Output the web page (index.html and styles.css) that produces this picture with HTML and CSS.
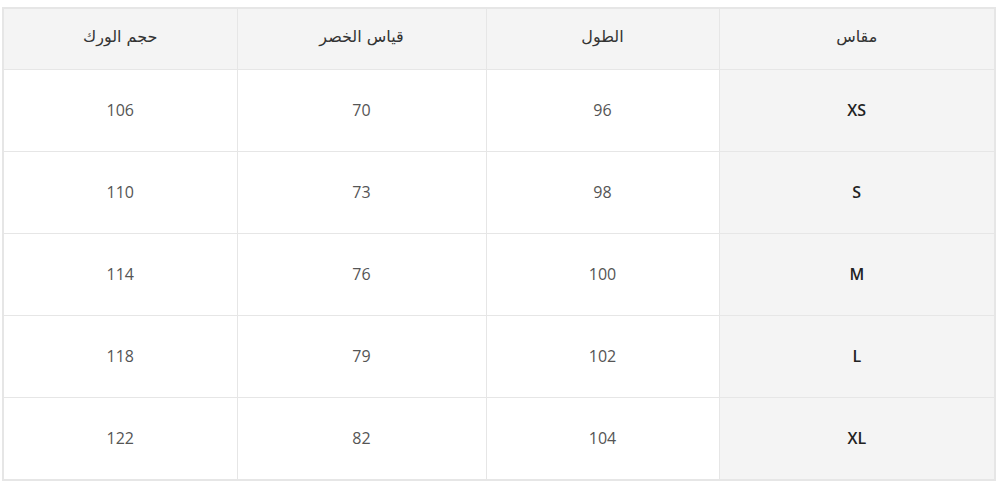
FILE: index.html
```html
<!DOCTYPE html>
<html lang="ar" dir="rtl">
<head>
<meta charset="utf-8">
<link rel="stylesheet" href="styles.css">
</head>
<body>
<table class="size-table">
  <colgroup>
    <col class="c-size"><col class="c-len"><col class="c-waist"><col class="c-hip">
  </colgroup>
  <thead>
    <tr><th>مقاس</th><th>الطول</th><th>قياس الخصر</th><th>حجم الورك</th></tr>
  </thead>
  <tbody>
    <tr><td class="size">XS</td><td>96</td><td>70</td><td>106</td></tr>
    <tr><td class="size">S</td><td>98</td><td>73</td><td>110</td></tr>
    <tr><td class="size">M</td><td>100</td><td>76</td><td>114</td></tr>
    <tr><td class="size">L</td><td>102</td><td>79</td><td>118</td></tr>
    <tr><td class="size">XL</td><td>104</td><td>82</td><td>122</td></tr>
  </tbody>
</table>
</body>
</html>
```
FILE: styles.css
```css
html, body {
  margin: 0;
  padding: 0;
  background: #ffffff;
}
body {
  padding: 7px 3px 0 4px;
  font-family: "Open Sans", "DejaVu Sans", sans-serif;
}
.size-table {
  width: 992px;
  border-collapse: collapse;
  table-layout: fixed;
  border: 2px solid #e6e6e6;
}
.c-size { width: 276px; }
.c-len { width: 233px; }
.c-waist { width: 249px; }
.c-hip { width: 234px; }
.size-table th,
.size-table td {
  border: 1px solid #e6e6e6;
  text-align: center;
  vertical-align: middle;
  padding: 0;
}
.size-table th {
  height: 61px;
  padding-bottom: 5px;
  box-sizing: border-box;
  background: #f4f4f4;
  font-family: "DejaVu Sans", "Open Sans", sans-serif;
  font-weight: 400;
  font-size: 16px;
  color: #333333;
}
.size-table td {
  height: 81px;
  font-size: 16px;
  color: #555555;
}
.size-table td.size {
  background: #f4f4f4;
  font-weight: 600;
  color: #222222;
}
```
